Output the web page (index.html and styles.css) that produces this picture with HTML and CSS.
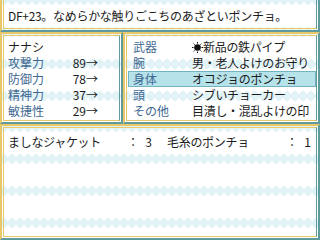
FILE: index.html
```html
<!DOCTYPE html>
<html lang="ja">
<head>
  <meta charset="UTF-8" />
  <title>そうび</title>
  <link rel="stylesheet" href="styles.css">
</head>
<body>
  <div class="screen">
    <!-- MESSAGE -->
    <div class="win msg">
      <div class="win-in">
        <p class="msg-text">DF+23。なめらかな触りごこちのあざといポンチョ。</p>
      </div>
    </div>

    <div class="mid">
      <!-- STATS -->
      <div class="win stats">
        <div class="win-in">
          <div class="row name">ナナシ</div>
          <div class="row stat"><span class="stat-label">攻撃力</span><span class="stat-num">89</span><span>→</span></div>
          <div class="row stat"><span class="stat-label">防御力</span><span class="stat-num">78</span><span>→</span></div>
          <div class="row stat"><span class="stat-label">精神力</span><span class="stat-num">37</span><span>→</span></div>
          <div class="row stat"><span class="stat-label">敏捷性</span><span class="stat-num">29</span><span>→</span></div>
        </div>
      </div>

      <!-- EQUIPMENT -->
      <div class="win equip">
        <div class="win-in">
          <div class="row slot">
            <span class="slot-label">武器</span>
            <span class="slot-item">
              <svg class="mark" width="11" height="11" viewBox="0 0 11 11">
                <circle cx="5.5" cy="5.5" r="3.3" fill="#111"/>
                <g stroke="#111" stroke-width="1">
                  <line x1="5.5" y1="0" x2="5.5" y2="1.5"/>
                  <line x1="5.5" y1="9.5" x2="5.5" y2="11"/>
                  <line x1="0" y1="5.5" x2="1.5" y2="5.5"/>
                  <line x1="9.5" y1="5.5" x2="11" y2="5.5"/>
                  <line x1="1.6" y1="1.6" x2="2.6" y2="2.6"/>
                  <line x1="8.4" y1="8.4" x2="9.4" y2="9.4"/>
                  <line x1="9.4" y1="1.6" x2="8.4" y2="2.6"/>
                  <line x1="1.6" y1="9.4" x2="2.6" y2="8.4"/>
                </g>
              </svg>新品の鉄パイプ</span>
          </div>
          <div class="row slot"><span class="slot-label">腕</span><span class="slot-item">男・老人よけのお守り</span></div>
          <div class="row slot active"><span class="slot-label">身体</span><span class="slot-item">オコジョのポンチョ</span></div>
          <div class="row slot"><span class="slot-label">頭</span><span class="slot-item">シブいチョーカー</span></div>
          <div class="row slot"><span class="slot-label">その他</span><span class="slot-item">目潰し・混乱よけの印</span></div>
        </div>
      </div>
    </div>

    <!-- BAG -->
    <div class="win bag">
      <div class="win-in">
        <div class="bag-grid">
          <div class="bag-item"><span class="bag-name">ましなジャケット</span><span class="bag-colon">：</span><span class="bag-count">3</span></div>
          <div class="bag-item"><span class="bag-name">毛糸のポンチョ</span><span class="bag-colon">：</span><span class="bag-count">1</span></div>
        </div>
      </div>
    </div>
  </div>
</body>
</html>
```

FILE: styles.css
```css
* {margin: 0; padding: 0; box-sizing: border-box;}
body {
  font-family: "Noto Sans CJK JP", "Noto Sans", sans-serif;
  font-size: 12px;
  color: #1c1c1c;
  background: #fff;
  overflow: hidden;
}
.screen {width: 320px; height: 240px; display: flex; flex-direction: column;}

/* Window frame: yellow top/left, teal right/bottom, double line */
.win {
  display: flex;
  border: 2px solid;
  border-color: #e8c868 #5f9a9c #5f9a9c #e8c868;
  padding: 1px;
  background-color: #fff;
  background-image:
    radial-gradient(ellipse 4px 5px at 4px 16px, #e2f3f8 92%, transparent 100%),
    linear-gradient(to bottom, transparent 14px, #fbf0c4 14px, #fbf0c4 18px, transparent 18px);
  background-size: 8px 32px;
  background-origin: border-box;
  background-position: 0 -16px;
}
.win-in {
  flex: 1;
  border: 1px solid;
  border-color: #e8c868 #5f9a9c #e8c868 #e8c868;
}

/* Message */
.msg {height: 32px; border-top-width: 0; padding-top: 0;}
.msg .win-in {border-top-width: 0;}
.msg-text {padding: 4px 0 0 4px; line-height: 24px; letter-spacing: -0.3px; white-space: nowrap;}

/* Middle */
.mid {display: flex; height: 92px;}
.row {height: 16px; line-height: 16px; display: flex; white-space: nowrap;}
.stats {width: 123px;}
.stats .win-in {padding: 3px 0 0 4px;}
.stat-label {width: 62px; color: #3f6891;}
.stat-num {width: 16px; text-align: right;}

.equip {flex: 1;}
.equip .win-in {padding-top: 3px;}
.slot {padding-left: 5px; margin-left: 1px;}
.slot-label {width: 59px; color: #3f6891;}
.slot-item {letter-spacing: -0.3px; display: flex; align-items: center;}
.mark {margin-right: 0;}
.slot.active {
  background: #b6e2ea;
  box-shadow: inset 0 0 0 1px #74b4c2;
}

/* Bag */
.bag {height: 116px; background-position: 0 -13px;}
.bag .win-in {padding: 6px 5px 0 4px;}
.bag-grid {display: grid; grid-template-columns: 1fr 1fr; column-gap: 15px;}
.bag-item {display: flex; height: 16px; line-height: 16px; white-space: nowrap;}
.bag-name {flex: 1; letter-spacing: -0.3px;}
.bag-colon {width: 12px; text-align: center;}
.bag-count {width: 13px; text-align: right;}
```
